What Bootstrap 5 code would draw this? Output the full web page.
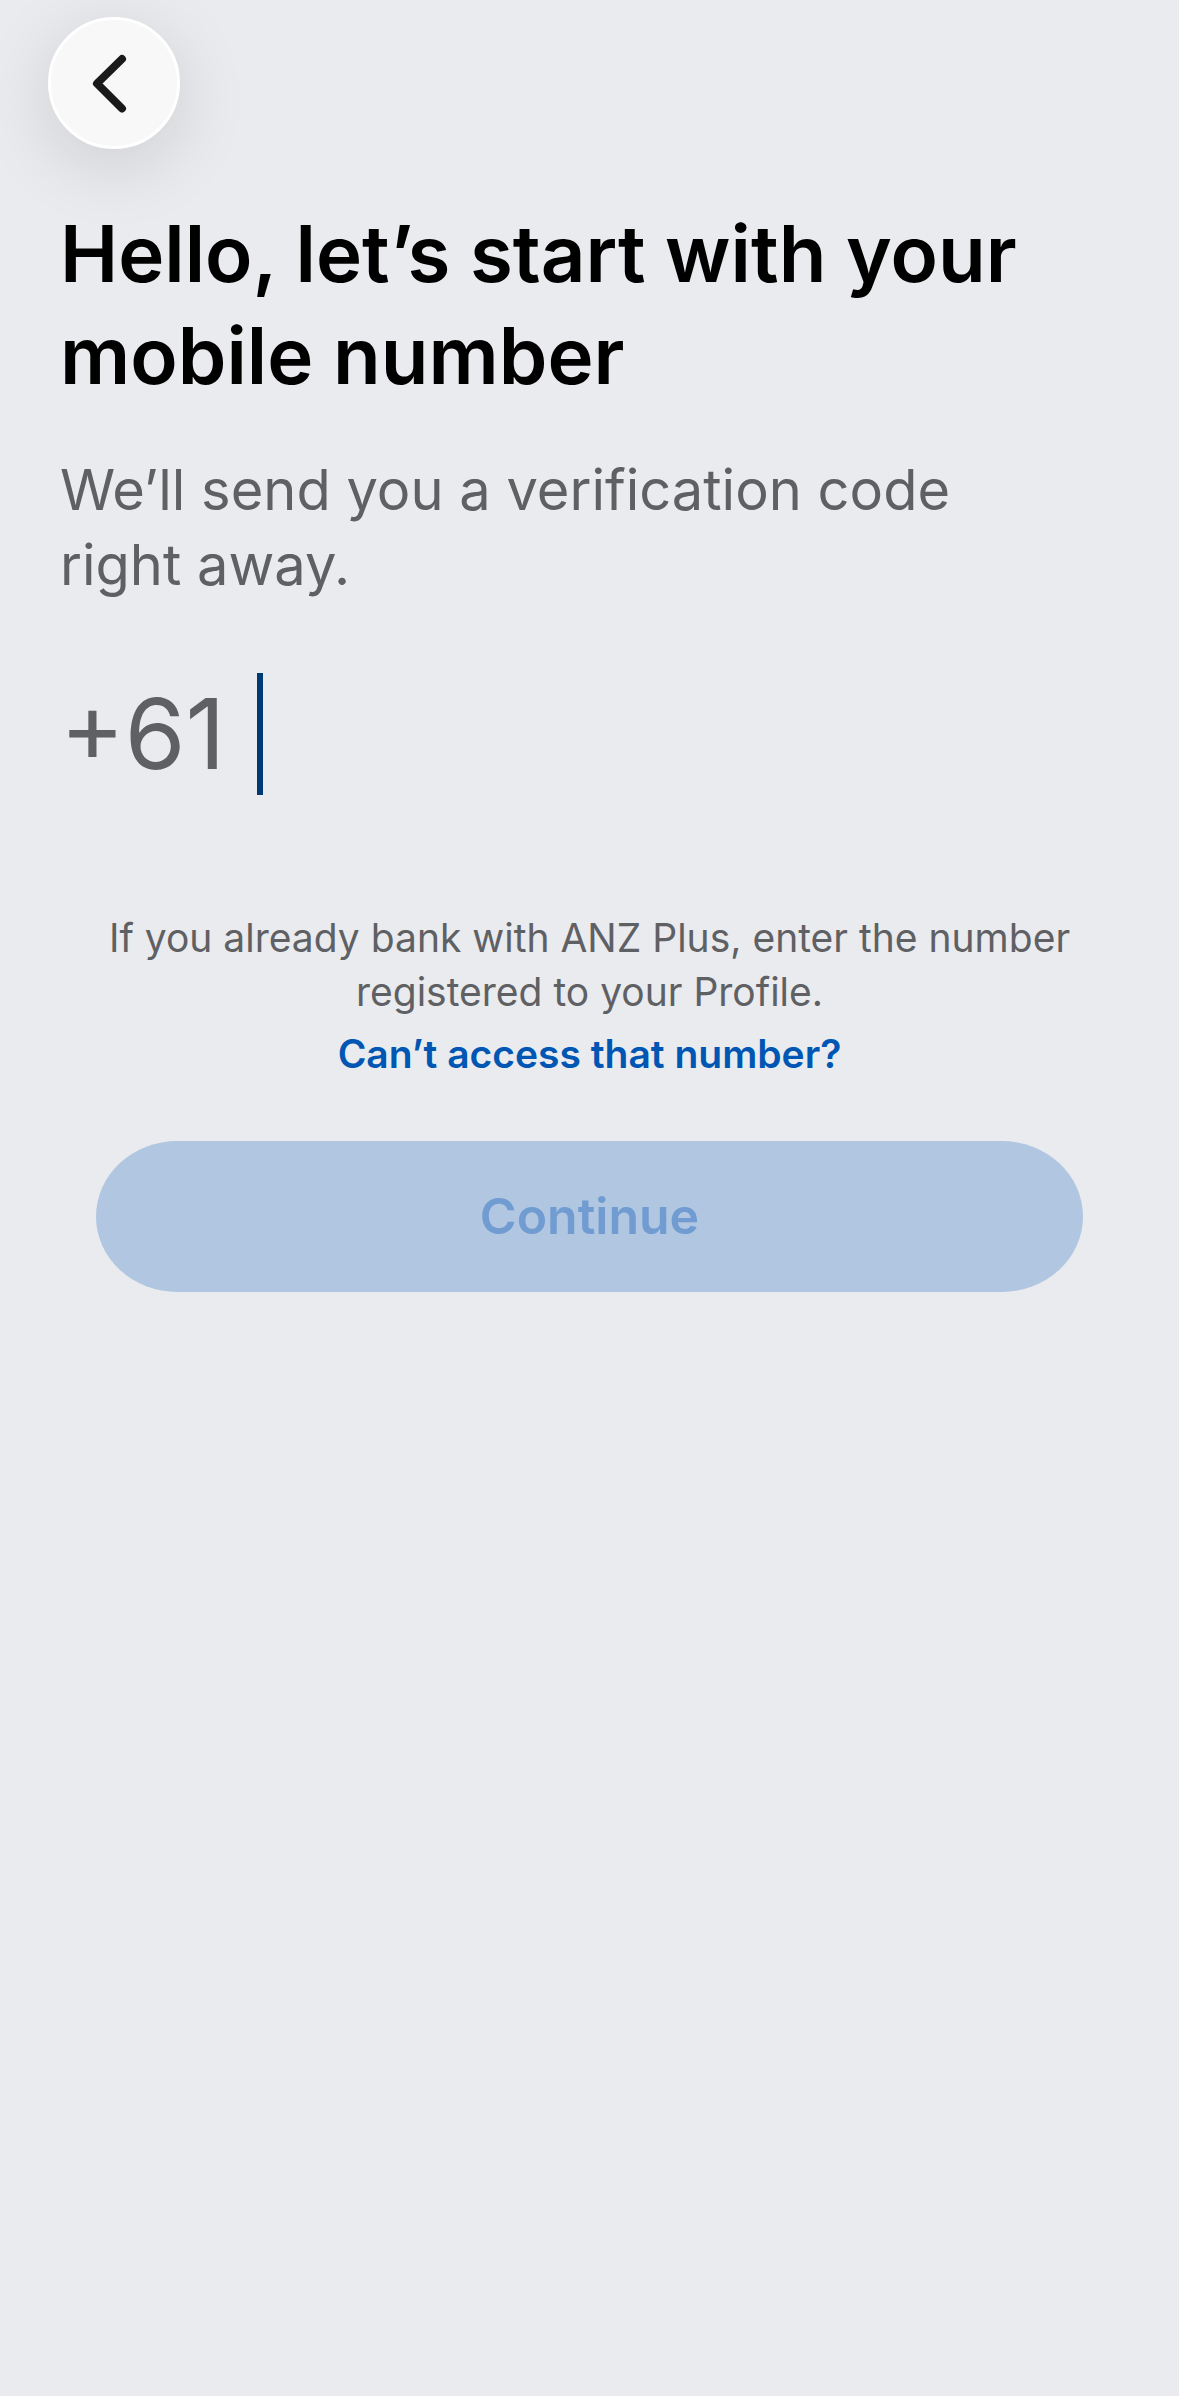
<!DOCTYPE html>
<html lang="en">
<head>
<meta charset="utf-8">
<meta name="viewport" content="width=device-width, initial-scale=1">
<title>Mobile number</title>
<link href="https://cdn.jsdelivr.net/npm/bootstrap@5.3.0/dist/css/bootstrap.min.css" rel="stylesheet">
<style>
  body { background: #e9ebee; color: #5f6064; font-family: Inter, "Liberation Sans", sans-serif; }
  .screen { padding: 17px 48px; }
  .back-btn { width: 132px; height: 132px; background: #f8f8f8; border: 3px solid #fff; color: #1a1a1a; box-shadow: 0 16px 72px rgba(0, 0, 0, .13); }
  .intro { padding: 54px 12px 0; }
  .title-text { font-size: 78px; line-height: 102px; font-weight: 600; color: #000; margin-bottom: 46px; }
  .sub-text { font-size: 56px; line-height: 75px; max-width: 960px; margin-bottom: 70px; }
  .phone-row { font-size: 98px; line-height: 122px; gap: 32px; }
  .phone-field { min-width: 0; }
  .caret-bar { width: 6px; flex: none; background: #003a75; }
  .phone-input { min-width: 0; outline: 0; }
  .help-area { padding: 116px 48px 0; font-size: 39px; line-height: 54px; }
  .help-link { color: #0056b3; font-weight: 600; margin: 8px 0 60px; }
  .continue-btn, .continue-btn:disabled { height: 151px; border: 0; border-radius: 82px / 76px; background: #b1c6e1; color: #709cd1; font-size: 50px; font-weight: 600; opacity: 1; }
</style>
</head>
<body>
<main class="screen">
  <button type="button" class="back-btn btn rounded-circle p-0 d-flex align-items-center justify-content-center" aria-label="Back">
    <svg width="126" height="126" viewBox="0 0 126 126" fill="none" stroke="currentColor" stroke-width="8" stroke-linecap="round" stroke-linejoin="round" aria-hidden="true"><path d="M71 39 46 63.500 71 88.500"/></svg>
  </button>
  <form>
    <div class="intro">
      <h1 class="title-text">Hello, let’s start with your mobile number</h1>
      <p class="sub-text">We’ll send you a verification code right away.</p>
      <div class="phone-row d-flex align-items-stretch">
        <label for="phone">+61</label>
        <div class="phone-field d-flex flex-grow-1">
          <span class="caret-bar"></span>
          <input id="phone" type="tel" class="phone-input border-0 bg-transparent p-0 w-100">
        </div>
      </div>
    </div>
    <div class="help-area d-flex flex-column text-center">
      <p class="mb-0">If you already bank with ANZ Plus, enter the number registered to your Profile.</p>
      <a href="#" class="help-link align-self-center text-decoration-none">Can’t access that number?</a>
      <button type="submit" class="continue-btn btn w-100" disabled>Continue</button>
    </div>
  </form>
</main>
<script src="https://cdn.jsdelivr.net/npm/bootstrap@5.3.0/dist/js/bootstrap.bundle.min.js"></script>
</body>
</html>
